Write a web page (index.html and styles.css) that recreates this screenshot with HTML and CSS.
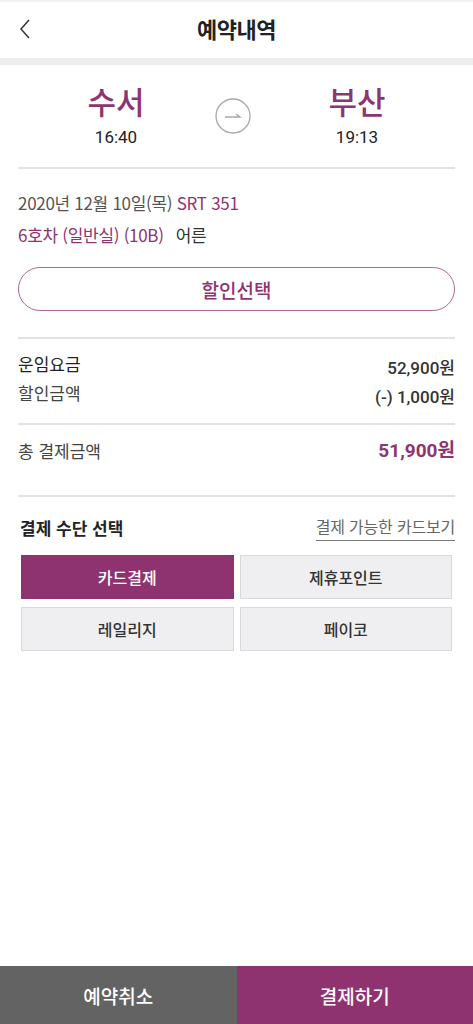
FILE: index.html
```html
<!DOCTYPE html>
<html lang="ko">
<head>
<meta charset="utf-8">
<link rel="stylesheet" href="styles.css">
</head>
<body>
<div class="app">
  <header class="topbar">
    <button class="back" aria-label="뒤로">
      <svg width="14" height="22" viewBox="0 0 14 22"><path d="M11 2 L3 11 L11 20" fill="none" stroke="#333" stroke-width="1.5"/></svg>
    </button>
    <h1 class="title">예약내역</h1>
  </header>
  <div class="band"></div>

  <main class="content">
    <section class="route">
      <div class="station">
        <div class="name">수서</div>
        <div class="time">16:40</div>
      </div>
      <div class="arrow">
        <svg width="38" height="38" viewBox="0 0 38 38"><circle cx="19" cy="19" r="17" fill="none" stroke="#a8a8a8" stroke-width="1.3"/><path d="M11 20 H26 L22 17" fill="none" stroke="#a8a8a8" stroke-width="1.3"/></svg>
      </div>
      <div class="station">
        <div class="name">부산</div>
        <div class="time">19:13</div>
      </div>
    </section>

    <section class="info">
      <p class="line">2020년 12월 10일(목) <span class="accent">SRT 351</span></p>
      <p class="line"><span class="accent">6호차 (일반실) (10B)</span><span class="who">어른</span></p>
      <button class="discount">할인선택</button>
    </section>

    <section class="fare">
      <div class="row"><span class="label strong">운임요금</span><span class="amount">52,900원</span></div>
      <div class="row"><span class="label">할인금액</span><span class="amount">(-) 1,000원</span></div>
    </section>

    <section class="total">
      <span class="label">총 결제금액</span><span class="amount accent big">51,900원</span>
    </section>

    <section class="pay">
      <div class="pay-head">
        <h2 class="pay-title">결제 수단 선택</h2>
        <a class="pay-link">결제 가능한 카드보기</a>
      </div>
      <div class="pay-grid">
        <button class="opt active">카드결제</button>
        <button class="opt">제휴포인트</button>
        <button class="opt">레일리지</button>
        <button class="opt">페이코</button>
      </div>
    </section>
  </main>

  <footer class="bottom">
    <button class="cancel">예약취소</button>
    <button class="confirm">결제하기</button>
  </footer>
</div>
</body>
</html>
```

FILE: styles.css
```css
* { box-sizing: border-box; }
html, body { margin: 0; padding: 0; }
body {
  font-family: "Noto Sans CJK KR", "Roboto", sans-serif;
  color: #222;
  background: #fff;
}
button { font-family: inherit; cursor: pointer; }
.app {
  width: 473px;
  height: 1024px;
  display: flex;
  flex-direction: column;
}
.topbar {
  height: 58px;
  border-top: 2px solid #f5eef2;
  padding-bottom: 5px;
  display: flex;
  align-items: center;
  justify-content: center;
  position: relative;
}
.back {
  position: absolute;
  left: 18px;
  top: 16px;
  border: 0;
  background: none;
  padding: 0;
  width: 16px;
  height: 22px;
  display: flex;
  align-items: center;
}
.title {
  margin: 0;
  font-size: 22px;
  font-weight: 700;
  color: #222;
  letter-spacing: -0.5px;
}
.band { height: 7px; background: #eeeef0; }
.content {
  flex: 1;
  padding: 0 18px;
  display: flex;
  flex-direction: column;
}
.route {
  display: flex;
  align-items: flex-start;
  justify-content: space-between;
  padding: 16px 0 20px;
  border-bottom: 2px solid #e3e3e3;
}
.station {
  width: 196px;
  display: flex;
  flex-direction: column;
  align-items: center;
}
.name {
  font-size: 31px;
  font-weight: 500;
  color: #8e3470;
  line-height: 40px;
}
.time {
  font-family: "Roboto", sans-serif;
  font-size: 17px;
  color: #222;
  line-height: 20px;
  margin-top: 6px;
}
.arrow { display: flex; margin-top: 16px; margin-right: 7px; }
.info { padding: 22px 0 26px; border-bottom: 2px solid #e3e3e3; }
.line {
  margin: 0 0 8px;
  font-size: 17px;
  line-height: 24px;
  color: #555;
  letter-spacing: -0.3px;
}
.accent { color: #8e3470; }
.who { margin-left: 12px; color: #333; }
.discount {
  display: block;
  width: 100%;
  height: 44px;
  margin-top: 20px;
  border: 1.5px solid #aa6a95;
  border-radius: 22px;
  background: #fff;
  color: #8e3470;
  font-size: 19px;
  font-weight: 500;
}
.fare { padding: 10px 0 16px; border-bottom: 2px solid #e3e3e3; }
.row {
  display: flex;
  justify-content: space-between;
  align-items: center;
  height: 29px;
}
.label { font-size: 17px; color: #444; }
.label.strong { color: #222; }
.amount {
  font-family: "Roboto", "Noto Sans CJK KR", sans-serif;
  font-size: 17px;
  font-weight: 500;
  color: #333;
  margin-top: 6px;
}
.total {
  display: flex;
  justify-content: space-between;
  align-items: flex-start;
  padding: 14px 0 32px;
  border-bottom: 2px solid #e3e3e3;
}
.total .label { line-height: 24px; }
.amount.big {
  font-size: 19px;
  font-weight: 700;
  color: #8e3470;
  margin-top: 0;
  line-height: 24px;
}
.pay { padding: 18px 0 0; }
.pay-head {
  display: flex;
  justify-content: space-between;
  align-items: flex-start;
  margin-bottom: 14px;
}
.pay-title {
  margin: 0 0 0 2px;
  font-size: 17px;
  font-weight: 700;
  color: #222;
  line-height: 26px;
}
.pay-link {
  font-size: 16px;
  color: #666;
  line-height: 23px;
  border-bottom: 1.5px solid #777;
  padding-bottom: 2px;
  letter-spacing: -0.2px;
}
.pay-grid {
  display: grid;
  grid-template-columns: 1fr 1fr;
  gap: 8px 6px;
  padding: 0 3px;
}
.opt {
  height: 44px;
  border: 1px solid #d9d9dc;
  background: #efeff1;
  color: #333;
  font-size: 16px;
  font-weight: 500;
}
.opt.active {
  background: #8e3370;
  border-color: #8e3370;
  color: #fff;
}
.bottom {
  display: flex;
  height: 58px;
}
.bottom button {
  flex: 1;
  border: 0;
  color: #fff;
  font-size: 19px;
  font-weight: 500;
}
.cancel { background: #636363; }
.confirm { background: #8e3370; }
```
